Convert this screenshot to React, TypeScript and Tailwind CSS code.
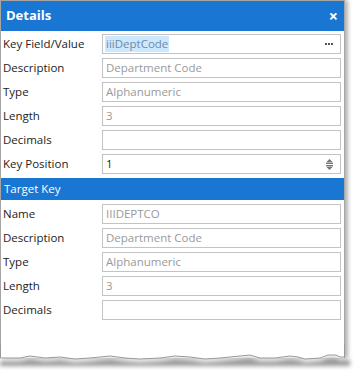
import React from "react";

const font = { fontFamily: '"Open Sans", "Noto Sans", sans-serif' };

const Row = ({ label, children }: { label: string; children: React.ReactNode }) => (
  <div className="flex items-center h-[20px]">
    <div className="w-[101px] pl-[2px] text-[11.5px] text-[#222] leading-none">{label}</div>
    {children}
  </div>
);

const Field = ({
  value,
  dim = true,
  right,
  selected,
}: {
  value?: string;
  dim?: boolean;
  right?: React.ReactNode;
  selected?: boolean;
}) => (
  <div className="w-[239px] h-[20px] border border-[#c3c3c3] bg-white flex items-center pl-[2px] pr-[6px] text-[11.5px] leading-none">
    <span
      className={
        selected
          ? "bg-[#cce8ff] text-[#6f8aa3] px-[1px] h-[16px] flex items-center"
          : dim
          ? "text-[#9a9a9a] px-[1px]"
          : "text-[#222] px-[1px]"
      }
    >
      {value}
    </span>
    <div className="ml-auto flex items-center">{right}</div>
  </div>
);

const Dots = () => (
  <svg width="9" height="3" viewBox="0 0 9 3">
    <rect x="0" y="0" width="2" height="2" fill="#555" />
    <rect x="3" y="0" width="2" height="2" fill="#555" />
    <rect x="6" y="0" width="2" height="2" fill="#555" />
  </svg>
);

const Spinner = () => (
  <svg width="9" height="11" viewBox="0 0 9 11">
    <path d="M4.5 0 L8 3.5 H1 Z" fill="#777" />
    <rect x="1" y="4" width="7" height="1" fill="#777" />
    <rect x="1" y="6" width="7" height="1" fill="#777" />
    <path d="M1 7.5 H8 L4.5 11 Z" fill="#777" />
  </svg>
);

export default function App() {
  return (
    <div className="w-[359px] h-[376px] bg-white relative overflow-hidden" style={font}>
      <div className="w-[345px] h-[358px] border-l border-r border-t border-[#a5a5a5] bg-white flex flex-col shadow-[3px_0_4px_rgba(0,0,0,0.3)]">
        <div className="h-[30px] bg-[#1976d2] flex items-center justify-between pl-[5px] pr-[4px]">
          <span className="text-white font-bold text-[13px]">Details</span>
          <span className="text-white font-bold text-[16px] mr-[2px]">×</span>
        </div>
        <div className="flex flex-col gap-[4px] pt-[3px]">
          <Row label="Key Field/Value">
            <Field value="iiiDeptCode" selected right={<Dots />} />
          </Row>
          <Row label="Description">
            <Field value="Department Code" />
          </Row>
          <Row label="Type">
            <Field value="Alphanumeric" />
          </Row>
          <Row label="Length">
            <Field value="3" />
          </Row>
          <Row label="Decimals">
            <Field />
          </Row>
          <Row label="Key Position">
            <Field value="1" dim={false} right={<Spinner />} />
          </Row>
          <div className="h-[22px] bg-[#1976d2] flex items-center pl-[3px] text-white text-[11.5px]">
            Target Key
          </div>
          <Row label="Name">
            <Field value="IIIDEPTCO" />
          </Row>
          <Row label="Description">
            <Field value="Department Code" />
          </Row>
          <Row label="Type">
            <Field value="Alphanumeric" />
          </Row>
          <Row label="Length">
            <Field value="3" />
          </Row>
          <Row label="Decimals">
            <Field />
          </Row>
        </div>
      </div>
      <svg className="absolute left-0 top-[345px]" width="359" height="31" viewBox="0 0 359 31">
        <defs>
          <filter id="b" x="-5%" y="-50%" width="110%" height="200%">
            <feGaussianBlur stdDeviation="2" />
          </filter>
        </defs>
        <path
          d="M0 16 L20 16 L30 14 L45 16 L60 15 L75 17 L90 16 L110 14 L125 16 L140 17 L160 16 L175 14 L190 15 L205 17 L220 16 L240 14 L250 13 L260 16 L275 16 L290 14 L298 15 L305 17 L320 16 L328 13 L336 13 L340 15 L350 15 L350 21 L0 21 Z"
          fill="#999"
          filter="url(#b)"
        />
        <path
          d="M0 0 L0 13 L20 13 L30 11 L45 13 L60 12 L75 14 L90 13 L110 11 L125 13 L140 14 L160 13 L175 11 L190 12 L205 14 L220 13 L240 11 L250 10 L260 13 L275 13 L290 11 L298 12 L305 14 L320 13 L328 10 L336 10 L340 12 L345 12 L345 0 Z"
          fill="white"
        />
        <path
          d="M0.5 0 L0.5 13 L20 13 L30 11 L45 13 L60 12 L75 14 L90 13 L110 11 L125 13 L140 14 L160 13 L175 11 L190 12 L205 14 L220 13 L240 11 L250 10 L260 13 L275 13 L290 11 L298 12 L305 14 L320 13 L328 10 L336 10 L340 12 L344.5 12 L344.5 0"
          fill="none"
          stroke="#999"
          strokeWidth="1"
        />
      </svg>
    </div>
  );
}
